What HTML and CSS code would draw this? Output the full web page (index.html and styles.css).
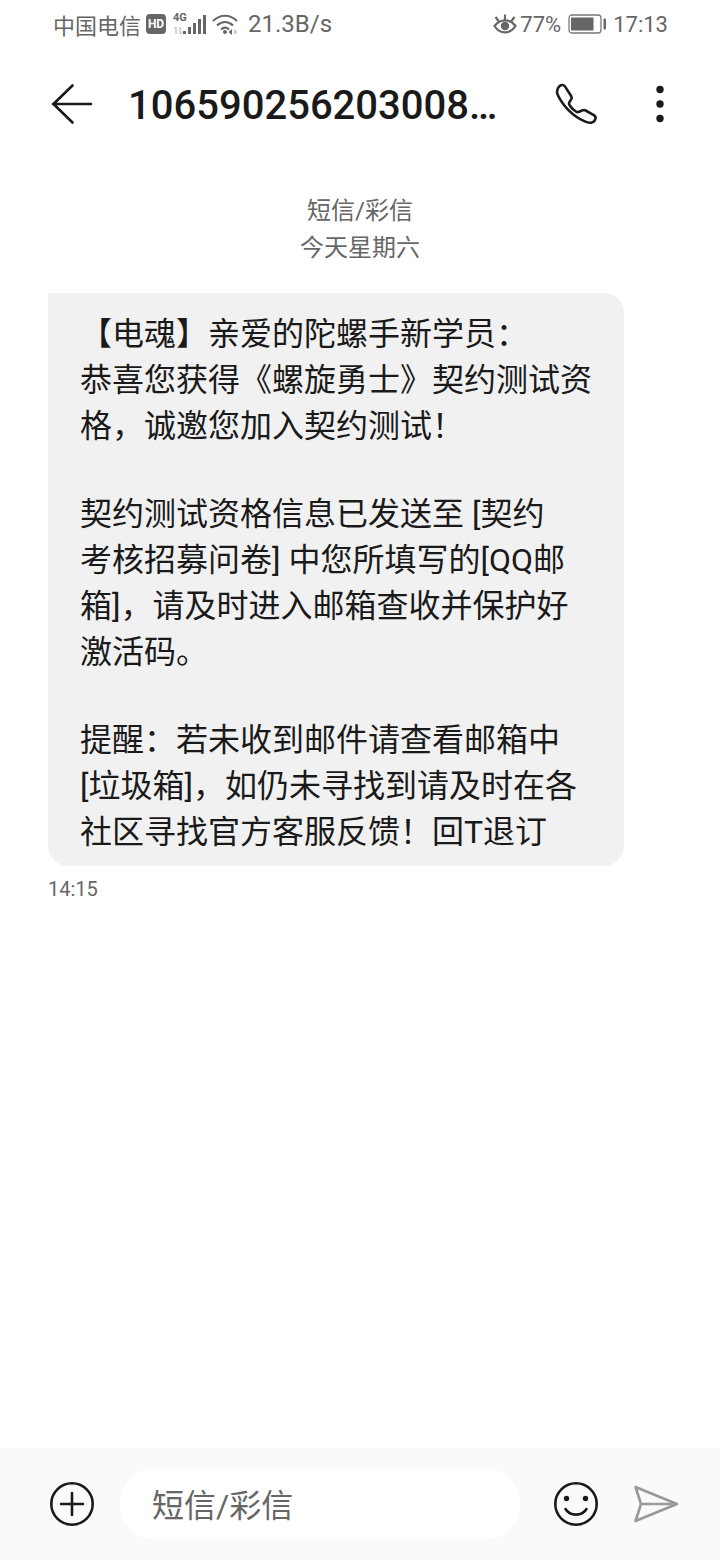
FILE: index.html
```html
<!DOCTYPE html>
<html lang="zh-CN">
<head>
<meta charset="UTF-8">
<meta name="viewport" content="width=device-width, initial-scale=1.0">
<title>短信</title>
<link rel="stylesheet" href="styles.css">
</head>
<body>
<div class="status-bar">
  <div class="status-group">
    <span>中国电信</span>
    <span class="hd-badge">HD</span>
    <div class="signal">
      <span class="signal-type">4G</span>
      <svg width="36" height="22" viewBox="0 0 36 22">
        <path d="M4 21v-7M2 16l2-2M8 14v7M8 21l2-2" fill="none" stroke="#ccc" stroke-width="1.500"/>
        <path d="M12.500 21v-3M17.500 21v-7M22.500 21V10M27.500 21V6M32.500 21V2" fill="none" stroke="#666" stroke-width="3"/>
      </svg>
    </div>
    <svg class="icon-wifi" width="26" height="22" viewBox="0 0 26 22">
      <path d="M1 8C8 1 18 1 25 8M5 12.500c5-4.500 11-4.500 16 0M9 16.500c3-2.500 5.500-2.500 8 0" fill="none" stroke="#666" stroke-width="2.200"/>
      <circle cx="13" cy="19" r="2" fill="#666"/>
      <path d="M20 16v6l-3.500-3z" fill="#666"/>
      <path d="M22 16v6l3.500-3z" fill="#ccc"/>
    </svg>
    <span class="speed">21.3B/s</span>
  </div>
  <div class="status-group">
    <svg class="icon-eye" width="24" height="22" viewBox="0 0 24 22">
      <path d="M1.500 13C7 5.500 17 5.500 22.500 13 17 21.500 7 21.500 1.500 13zM12 7V1.500M5.500 8 2.500 4M18.500 8l3-4" fill="none" stroke="#666" stroke-width="2.200"/>
      <circle cx="12" cy="13" r="4.200" fill="#666"/>
    </svg>
    <span>77%</span>
    <svg class="icon-battery" width="38" height="20" viewBox="0 0 38 20">
      <rect x="1" y="1" width="32" height="18" rx="3" fill="none" stroke="#777" stroke-width="1.300"/>
      <rect x="3" y="3.500" width="22.500" height="13" fill="#666"/>
      <rect x="35.500" y="4.500" width="2.500" height="11" rx="1" fill="#666"/>
    </svg>
    <span>17:13</span>
  </div>
</div>

<header class="header">
  <button class="icon-button" aria-label="返回">
    <svg width="48" height="48" viewBox="0 0 48 48">
      <path d="M43 24H5M24.500 5.500 5.500 24l19 18.500" fill="none" stroke="#1a1a1a" stroke-width="2.600" stroke-linecap="round" stroke-linejoin="round"/>
    </svg>
  </button>
  <h1 class="title">106590256203008…</h1>
  <button class="icon-button" aria-label="拨打电话">
    <svg width="48" height="48" viewBox="0 0 48 48">
      <path d="M5.800 8.500C7 6 9 4.800 10.800 5c1 .1 1.700.7 2.300 1.600l6.200 9.700c.7 1.200.6 2-.1 3.100l-1.900 3c-.5 1-.4 1.900.3 2.900 1.700 2.600 3.700 4.600 6.300 6.200 1 .7 2 .8 3.100.3l3.800-1.500c1-.4 1.900-.3 2.800.2l8.200 4.700c1.500.9 2.100 2.100 1.600 3.600-.6 2.100-2 3.400-3.700 3.800-2.200.4-4.500-.1-6.900-1.200C20.500 36 10.500 25.500 5.700 14.800c-.9-2.200-.9-4.300.1-6.300z" fill="none" stroke="#1a1a1a" stroke-width="2.600" stroke-linejoin="round"/>
    </svg>
  </button>
  <button class="icon-button" aria-label="更多">
    <svg width="48" height="48" viewBox="0 0 48 48" fill="#1a1a1a">
      <circle cx="24" cy="9.500" r="3.700"/>
      <circle cx="24" cy="24" r="3.700"/>
      <circle cx="24" cy="38.500" r="3.700"/>
    </svg>
  </button>
</header>

<main class="chat">
  <div class="chat-date">短信/彩信<br>今天星期六</div>
  <div class="message">
    <p>【电魂】亲爱的陀螺手新学员：<br>恭喜您获得《螺旋勇士》契约测试资格，诚邀您加入契约测试！</p>
    <p>契约测试资格信息已发送至 [契约<br>考核招募问卷] 中您所填写的[QQ邮箱]，请及时进入邮箱查收并保护好激活码。</p>
    <p>提醒：若未收到邮件请查看邮箱中<br>[垃圾箱]，如仍未寻找到请及时在各社区寻找官方客服反馈！回T退订</p>
  </div>
  <time class="message-time">14:15</time>
</main>

<form class="composer">
  <button type="button" class="icon-button" aria-label="添加">
    <svg width="48" height="48" viewBox="0 0 48 48" fill="none" stroke="#1a1a1a" stroke-width="2.600" stroke-linecap="round">
      <circle cx="24" cy="24" r="20.700"/>
      <path d="M24 13v22M13 24h22"/>
    </svg>
  </button>
  <input class="composer-input" type="text" placeholder="短信/彩信" aria-label="短信/彩信">
  <button type="button" class="icon-button" aria-label="表情">
    <svg width="48" height="48" viewBox="0 0 48 48">
      <circle cx="24" cy="24" r="20.700" fill="none" stroke="#1a1a1a" stroke-width="2.600"/>
      <circle cx="14.500" cy="18.500" r="2.700" fill="#1a1a1a"/>
      <circle cx="33.500" cy="18.500" r="2.700" fill="#1a1a1a"/>
      <path d="M13.500 29c4.500 7.500 16.500 7.500 21 0" fill="none" stroke="#1a1a1a" stroke-width="2.600" stroke-linecap="round"/>
    </svg>
  </button>
  <button type="button" class="icon-button" aria-label="发送">
    <svg width="48" height="48" viewBox="0 0 48 48" fill="none" stroke="#999" stroke-width="2.600" stroke-linecap="round" stroke-linejoin="round">
      <path d="M3.500 7 45 24 3.500 41 9 24zM9 24h36"/>
    </svg>
  </button>
</form>
</body>
</html>
```
FILE: styles.css
```css
* {
  box-sizing: border-box;
}

body {
  margin: 0;
  min-height: 100vh;
  display: flex;
  flex-direction: column;
  background: #fff;
  color: #1a1a1a;
  font-family: Roboto, "Noto Sans CJK SC", sans-serif;
}

/* Status bar */
.status-bar {
  display: flex;
  justify-content: space-between;
  align-items: center;
  height: 48px;
  padding: 0 52px 0 53px;
  color: #666;
  font-size: 22px;
}

.status-group {
  display: flex;
  align-items: center;
}

.hd-badge {
  width: 20px;
  margin: 0 6px 0 5px;
  border-radius: 4px;
  background: #666;
  color: #fff;
  font-size: 12px;
  font-weight: 700;
  line-height: 20px;
  text-align: center;
}

.signal {
  position: relative;
  display: flex;
}

.signal-type {
  position: absolute;
  top: -1px;
  left: 1px;
  font-size: 11px;
  font-weight: 700;
  line-height: 12px;
}

.icon-wifi {
  margin: 0 10px 0 4px;
}

.icon-eye {
  margin-right: 3px;
}

.speed {
  font-size: 24px;
}

.icon-battery {
  margin: 0 7px;
}

/* Header */
.header {
  display: flex;
  align-items: center;
  gap: 36px;
  height: 112px;
  padding: 0 36px 0 48px;
}

.icon-button {
  flex: none;
  width: 48px;
  height: 48px;
  padding: 0;
  border: none;
  background: none;
  cursor: pointer;
}

.icon-button svg {
  display: block;
}

.title {
  flex: 1;
  margin: 0 0 0 -4px;
  padding-top: 3px;
  overflow: hidden;
  font-size: 40px;
  font-weight: 500;
  white-space: nowrap;
}

/* Messages */
.chat {
  flex: 1;
  padding: 33px 48px;
}

.chat-date {
  margin-bottom: 26px;
  color: #666;
  font-size: 24px;
  line-height: 37px;
  text-align: center;
}

.message {
  width: 576px;
  max-width: 100%;
  padding: 18px 32px 11px;
  border-radius: 0 20px 20px 20px;
  background: #f1f1f1;
  font-size: 32px;
  line-height: 46px;
  text-spacing-trim: space-all;
}

.message p {
  margin: 0 0 42px;
}

.message p:last-child {
  margin-bottom: 0;
}

.message-time {
  display: block;
  margin-top: 10px;
  color: #666;
  font-size: 20px;
  line-height: 26px;
}

/* Composer */
.composer {
  display: flex;
  align-items: center;
  gap: 32px;
  height: 112px;
  padding: 0 40px 0 48px;
  background: #fafafa;
}

.composer-input {
  flex: 1;
  min-width: 0;
  height: 72px;
  margin: 0 0 0 -8px;
  padding: 4px 32px 0;
  border: none;
  border-radius: 36px;
  outline: none;
  background: #fff;
  color: #1a1a1a;
  font-family: inherit;
  font-size: 32px;
}

.composer-input::placeholder {
  color: #666;
}
```
